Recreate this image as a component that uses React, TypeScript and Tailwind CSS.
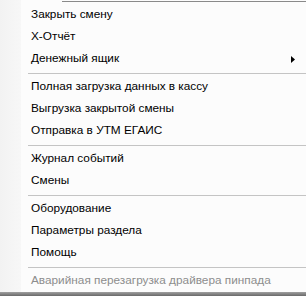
import React from 'react';

type Entry = { label: string; sub?: boolean; disabled?: boolean } | 'sep';

const entries: Entry[] = [
  { label: 'Закрыть смену' },
  { label: 'X-Отчёт' },
  { label: 'Денежный ящик', sub: true },
  'sep',
  { label: 'Полная загрузка данных в кассу' },
  { label: 'Выгрузка закрытой смены' },
  { label: 'Отправка в УТМ ЕГАИС' },
  'sep',
  { label: 'Журнал событий' },
  { label: 'Смены' },
  'sep',
  { label: 'Оборудование' },
  { label: 'Параметры раздела' },
  { label: 'Помощь' },
  'sep',
  { label: 'Аварийная перезагрузка драйвера пинпада', disabled: true },
];

export default function App() {
  return (
    <div className="relative w-[306px] h-[296px] overflow-hidden bg-[#fcfcfc] font-['Liberation_Sans',Arial,sans-serif] text-[11.8px]">
      {/* parent menu edge */}
      <div className="absolute top-[1px] left-[62px] right-0 h-[1px] bg-[#8a8a8a]" />
      {/* icon gutter */}
      <div className="absolute top-0 left-0 bottom-0 w-[21px] bg-gradient-to-r from-[#f2f2f2] to-[#f7f7f7]" />
      {/* bottom shadow */}
      <div className="absolute left-0 right-0 bottom-0 h-[4px] bg-gradient-to-b from-[#a0a0a0] to-[#6a6a6a]" />

      <div className="relative flex flex-col pt-[4px]">
        {entries.map((e, i) =>
          e === 'sep' ? (
            <div key={i} className="h-[6px] pt-[3px] pl-[28px]">
              <div className="h-[1px] w-full bg-[#c4c4c4]" />
            </div>
          ) : (
            <div
              key={i}
              className={`h-[22px] flex items-center pl-[31px] pr-[10px] leading-none ${
                e.disabled ? 'text-[#8d8d8d]' : 'text-black'
              }`}
            >
              <span className="flex-1 whitespace-nowrap">{e.label}</span>
              {e.sub && (
                <svg width="4" height="7" viewBox="0 0 4 7" className="mr-[1px]">
                  <path d="M0 0 L4 3.5 L0 7 Z" fill="#000" />
                </svg>
              )}
            </div>
          )
        )}
      </div>
    </div>
  );
}
